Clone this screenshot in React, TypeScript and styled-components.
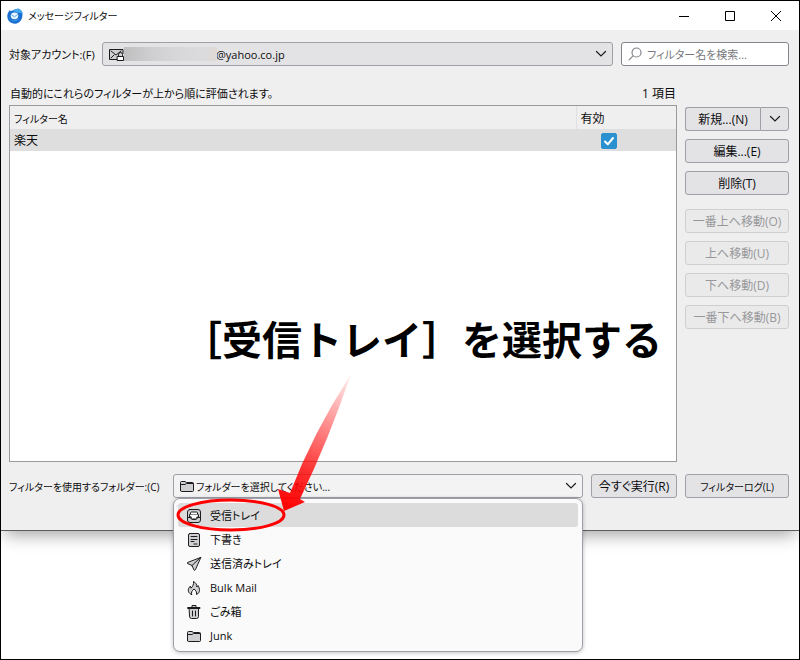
import React from "react";
import styled, { createGlobalStyle } from "styled-components";

const GlobalStyle = createGlobalStyle`
  *, *::before, *::after { box-sizing: border-box; }
  body {
    margin: 0;
    background: #fff;
    color: #0c0c0d;
    font-family: "Open Sans", "Noto Sans CJK JP", sans-serif;
    font-size: 12px;
    line-height: 16px;
    font-feature-settings: "palt";
  }
  button, input, select { font: inherit; font-feature-settings: inherit; color: inherit; margin: 0; }
`;

const Desktop = styled.div`
  display: flex;
  flex-direction: column;
  min-height: 100vh;
  padding-bottom: 128px;
  border: 1px solid #000;
  overflow: hidden;
`;

const Dialog = styled.main`
  flex: 1;
  display: flex;
  flex-direction: column;
  background: #efefef;
  border-bottom: 1px solid #5c5c5c;
  box-shadow: 0 8px 16px -4px rgba(0, 0, 0, 0.36);
`;

const TitleBar = styled.header`
  display: flex;
  align-items: center;
  height: 29px;
  padding-left: 6px;
  gap: 5px;
  background: #fff;
`;

const Title = styled.h1`
  flex: 1;
  margin: 0;
  font-size: 10px;
  font-weight: 400;
`;

const WindowButtons = styled.div`
  display: flex;
`;

const WindowButton = styled.button`
  display: grid;
  place-items: center;
  width: 46px;
  height: 28px;
  padding: 0;
  border: 0;
  background: transparent;
`;

const Content = styled.div`
  flex: 1;
  display: flex;
  flex-direction: column;
  padding: 12px 10px 32px 8px;
`;

const Row = styled.div`
  display: flex;
  align-items: center;
  gap: 8px;
`;

const AccountLabel = styled.label`
  width: 85px;
  padding-top: 2px;
  font-size: 11px;
  white-space: nowrap;
`;

const FolderLabel = styled.label`
  width: 156px;
  padding-top: 2px;
  font-size: 10px;
  white-space: nowrap;
`;

const Picker = styled.div`
  flex: 1;
  position: relative;
  display: flex;
`;

const Select = styled.select<{ $indent: number; $light?: boolean }>`
  appearance: none;
  flex: 1;
  min-width: 0;
  height: 24px;
  padding: 2px 28px 0 ${(p) => p.$indent}px;
  border: 1px solid #9f9fa8;
  border-radius: 3px;
  background: ${(p) => (p.$light ? "#f3f3f3" : "#e3e3e6")};
  font-size: ${(p) => (p.$light ? 10 : 11)}px;
`;

const PickerLead = styled.span`
  position: absolute;
  left: 6px;
  top: 4px;
  display: flex;
  align-items: center;
  height: 16px;
  pointer-events: none;
`;

const PickerArrow = styled.span`
  position: absolute;
  right: 6px;
  top: 6px;
  display: flex;
  pointer-events: none;
`;

const Redaction = styled.span`
  width: 93px;
  height: 14px;
  background: linear-gradient(90deg, #bfbfc0, #cfcfd1 30%, #d8d8db 60%, #dbdbdd 85%, #e0d9d6);
`;

const SearchBox = styled.label`
  display: flex;
  align-items: center;
  gap: 5px;
  width: 168px;
  height: 24px;
  padding: 0 6px;
  border: 1px solid #85858d;
  border-radius: 3px;
  background: #fff;
`;

const SearchInput = styled.input`
  flex: 1;
  min-width: 0;
  padding: 2px 0 0;
  border: 0;
  outline: 0;
  background: transparent;
  font-size: 11px;
  &::placeholder { color: #77777c; opacity: 1; }
`;

const Columns = styled.div`
  flex: 1;
  display: grid;
  grid-template-columns: minmax(0, 1fr) 104px;
  grid-template-rows: auto 1fr;
  column-gap: 8px;
  margin: 20px 0 12px;
`;

const Caption = styled.div`
  display: flex;
  justify-content: space-between;
  padding: 0 1px;
  margin-bottom: 3px;
`;

const Hint = styled.span`
  font-size: 11px;
`;

const ListPane = styled.section`
  grid-row: 2;
  position: relative;
  border: 1px solid #9a9a9e;
  background: #fff;
`;

const FilterTable = styled.table`
  width: 100%;
  border-collapse: collapse;
  table-layout: fixed;
`;

const HeadCell = styled.th<{ $narrow?: boolean }>`
  width: ${(p) => (p.$narrow ? "100px" : "auto")};
  height: 23px;
  padding: 2px 4px 0;
  background: #efefef;
  border-left: ${(p) => (p.$narrow ? "1px solid #e0e0e2" : "0")};
  font-size: ${(p) => (p.$narrow ? 12 : 10)}px;
  font-weight: 400;
  text-align: left;
`;

const Cell = styled.td<{ $check?: boolean }>`
  height: 22px;
  padding: 2px 0 0 ${(p) => (p.$check ? 25 : 4)}px;
  background: #dedede;
`;

const CheckWrap = styled.label`
  display: grid;
  width: 16px;
  height: 16px;
  > * { grid-area: 1 / 1; }
`;

const CheckInput = styled.input`
  appearance: none;
  width: 16px;
  height: 16px;
  border: 1px solid #8f8f9d;
  border-radius: 2px;
  background: #fff;
  & + svg { display: none; pointer-events: none; }
  &:checked { border-color: #2a90cf; background: #2a90cf; }
  &:checked + svg { display: block; }
`;

const Actions = styled.div`
  grid-row: 2;
  display: flex;
  flex-direction: column;
  gap: 8px;
  padding-top: 2px;
`;

const ActionGroup = styled.div`
  display: flex;
  flex-direction: column;
  gap: 8px;
  margin-bottom: 6px;
`;

const Button = styled.button<{ $width?: number; $small?: boolean }>`
  width: ${(p) => (p.$width ? `${p.$width}px` : "auto")};
  height: 24px;
  padding: 2px 0 0;
  border: 1px solid #9f9fa8;
  border-radius: 3px;
  background: #e3e3e6;
  font-size: ${(p) => (p.$small ? 10 : 12)}px;
  white-space: nowrap;
  &:disabled {
    color: #98989a;
    border-color: #cfcfd1;
    background: #eaeaeb;
  }
`;

const Split = styled.div`
  display: flex;
  ${Button}:first-child { flex: 1; border-radius: 3px 0 0 3px; border-right: 0; }
  ${Button}:last-child { display: grid; place-items: center; padding: 0; border-radius: 0 3px 3px 0; }
`;

const Menu = styled.ul`
  position: absolute;
  top: 24px;
  left: 0;
  right: 0;
  margin: 0;
  padding: 4px;
  list-style: none;
  border: 1px solid #9f9fa8;
  border-radius: 7px;
  background: #fafafa;
  font-size: 11px;
  box-shadow: 0 1px 4px rgba(0, 0, 0, 0.25);
`;

const MenuItem = styled.li<{ $active?: boolean }>`
  display: flex;
  align-items: center;
  gap: 8px;
  height: 24px;
  padding: 1px 8px 0;
  border-radius: 3px;
  background: ${(p) => (p.$active ? "#dcdcdc" : "transparent")};
`;

const Callout = styled.p`
  position: absolute;
  right: 14px;
  bottom: 93px;
  margin: 0;
  color: #000;
  font-family: "Noto Sans CJK JP", sans-serif;
  font-size: 40px;
  font-weight: 700;
  line-height: 60px;
  font-feature-settings: normal;
  white-space: nowrap;
`;

const Pointer = styled.svg`
  position: absolute;
  left: 0;
  bottom: -37px;
  pointer-events: none;
`;

const Glyph = ({ children }: { children: React.ReactNode }) => (
  <svg width="16" height="16" viewBox="0 0 16 16" fill="#cfcfd1" stroke="#1c1c1e" strokeLinecap="round" strokeLinejoin="round" aria-hidden="true">
    {children}
  </svg>
);

const FolderIcon = () => (
  <Glyph>
    <path d="M1.5 12.500v-8q0-1 1-1H6l1.500 1h6q1 0 1 1v7q0 1-1 1h-11q-1 0-1-1z" />
    <path d="M1.500 6.500H6l1.500-1h6.500" fill="none" />
  </Glyph>
);

const InboxIcon = () => (
  <Glyph>
    <rect x="1.500" y="1.500" width="13" height="13" rx="2.500" />
    <path d="M2 9.500h2.500q.5 2 2 2h3q1.500 0 2-2H14" fill="none" />
    <path d="M3.500 9V7q0-1 1-1h7q1 0 1 1v2h-1.500q-.5 2-1.500 2h-3q-1 0-1.500-2z" fill="#fff" />
    <path d="M4.500 6V5q0-1 1-1h5q1 0 1 1v1" fill="#fff" />
  </Glyph>
);

const DraftIcon = () => (
  <Glyph>
    <rect x="2.500" y="1.500" width="11" height="13" rx="1.500" />
    <path d="M5 4.500h6M5 7.500h6M5 9.500h3M8 12h3" fill="none" />
  </Glyph>
);

const SentIcon = () => (
  <Glyph>
    <path d="M14.500 1.500 1.500 6.500q-.7.500 0 1L6 9.500l2 4.500q.6.800 1.200 0z" />
    <path d="M14.500 1.500 6 9.500" fill="none" />
  </Glyph>
);

const FireIcon = () => (
  <Glyph>
    <path d="M5.500 14.500C2.500 13.500 1.500 10.500 3 7.800l1.300-1.600.7 2C6.800 6.500 7.800 4.500 7.500 1.500c2.400 1.200 3.500 3.500 3.300 5.500l1.200-1.500c2 3.200 2.500 7.200-1.500 9 .5-2-.5-4-2.500-5.500-2 1.500-3 3.500-2.500 5.500z" />
  </Glyph>
);

const TrashIcon = () => (
  <Glyph>
    <path d="M3.500 4.500h9v8q0 2-2 2h-5q-2 0-2-2z" />
    <path d="M2 3.500h12v1H2zM6 3V1.500h4V3M6.500 7v5M9.500 7v5" />
  </Glyph>
);

const MailLockIcon = () => (
  <Glyph>
    <path d="M15 7.500V3.500H1.500v10H9" />
    <path d="M3 5l5 4 5-4M3 12l3-3" fill="none" />
    <path d="M10.500 10V8.500a2 2 0 0 1 4 0V10" fill="none" />
    <rect x="9.500" y="10.500" width="6" height="4" fill="#fff" />
  </Glyph>
);

const Chevron = () => (
  <svg width="12" height="12" viewBox="0 0 12 12" fill="none" stroke="#1c1c1e" strokeWidth="1.200" strokeLinecap="round" aria-hidden="true">
    <path d="M1.500 3.500 6 8l4.500-4.500" />
  </svg>
);

const AppLogo = () => (
  <svg width="16" height="16" viewBox="0 0 16 16" aria-hidden="true">
    <path d="M8 1.500C11 .2 13 1 14 2.500c1 .6 1.500 1.700 1.400 3C16 10.500 13 15.700 8 15.700 3.500 15.700.3 12.500.3 8.300c0-2 .5-3.500 1.600-4.800L3 1.700l.6 1.500z" fill="#1a6fd0" />
    <path d="M6 3C8 0 12 0 14 2.500c1 .6 1.500 1.700 1.400 3-2-.8-3-1-4.400-.5z" fill="#45a8f0" />
    <ellipse cx="7.500" cy="7.800" rx="3.800" ry="3.400" fill="#e8f5ff" />
    <path d="M4.300 6.500 7.500 8.800l3.200-2.300" fill="none" stroke="#5aaeea" strokeWidth="1" />
    <path d="M1 8.500c2 4 7 5 11.500 1.500-1 4-9 5-11.500-1.500z" fill="#3595ea" />
  </svg>
);

const folders = [
  { name: "受信トレイ", Icon: InboxIcon },
  { name: "下書き", Icon: DraftIcon },
  { name: "送信済みトレイ", Icon: SentIcon },
  { name: "Bulk Mail", Icon: FireIcon },
  { name: "ごみ箱", Icon: TrashIcon },
  { name: "Junk", Icon: FolderIcon },
];

const moves = ["一番上へ移動(O)", "上へ移動(U)", "下へ移動(D)", "一番下へ移動(B)"];

const windowShapes = [
  { label: "最小化", d: "M1 6.500h10" },
  { label: "最大化", d: "M1.500 1.500h9v9h-9z" },
  { label: "閉じる", d: "M1 1l10 10M11 1 1 11" },
];

export default function App() {
  return (
    <>
      <GlobalStyle />
      <Desktop>
        <Dialog>
          <TitleBar>
            <AppLogo />
            <Title>メッセージフィルター</Title>
            <WindowButtons>
              {windowShapes.map(({ label, d }) => (
                <WindowButton key={label} aria-label={label}>
                  <svg width="12" height="12" viewBox="0 0 12 12" fill="none" stroke="#000" aria-hidden="true">
                    <path d={d} />
                  </svg>
                </WindowButton>
              ))}
            </WindowButtons>
          </TitleBar>
          <Content>
            <Row>
              <AccountLabel htmlFor="account">対象アカウント:(F)</AccountLabel>
              <Picker>
                <Select id="account" $indent={113}>
                  <option>@yahoo.co.jp</option>
                </Select>
                <PickerLead>
                  <MailLockIcon />
                  <Redaction />
                </PickerLead>
                <PickerArrow><Chevron /></PickerArrow>
              </Picker>
              <SearchBox>
                <svg width="14" height="14" viewBox="0 0 14 14" fill="none" stroke="#85858a" strokeWidth="1.200" aria-hidden="true">
                  <circle cx="8.500" cy="5.500" r="4.500" />
                  <path d="M5.300 8.700.8 13.200" />
                </svg>
                <SearchInput type="search" aria-label="フィルター名を検索" placeholder="フィルター名を検索..." />
              </SearchBox>
            </Row>

            <Columns>
              <Caption>
                <Hint>自動的にこれらのフィルターが上から順に評価されます。</Hint>
                <span>1 項目</span>
              </Caption>
              <ListPane>
                <FilterTable>
                  <thead>
                    <tr>
                      <HeadCell>フィルター名</HeadCell>
                      <HeadCell $narrow>有効</HeadCell>
                    </tr>
                  </thead>
                  <tbody>
                    <tr>
                      <Cell>楽天</Cell>
                      <Cell $check>
                        <CheckWrap>
                          <CheckInput type="checkbox" defaultChecked aria-label="楽天 有効" />
                          <svg width="16" height="16" viewBox="0 0 16 16" fill="none" stroke="#fff" strokeWidth="2" strokeLinecap="round" strokeLinejoin="round" aria-hidden="true">
                            <path d="M4 8.500 6.800 11.300 12 5" />
                          </svg>
                        </CheckWrap>
                      </Cell>
                    </tr>
                  </tbody>
                </FilterTable>
                <Callout>［受信トレイ］を選択する</Callout>
              </ListPane>
              <Actions>
                <ActionGroup>
                  <Split>
                    <Button>新規...(N)</Button>
                    <Button $width={29} aria-label="新規メニュー"><Chevron /></Button>
                  </Split>
                  <Button>編集...(E)</Button>
                  <Button>削除(T)</Button>
                </ActionGroup>
                {moves.map((label) => (
                  <Button key={label} disabled>{label}</Button>
                ))}
              </Actions>
            </Columns>

            <Row>
              <FolderLabel htmlFor="folder">フィルターを使用するフォルダー:(C)</FolderLabel>
              <Picker>
                <Select id="folder" $indent={22} $light>
                  <option>フォルダーを選択してください...</option>
                </Select>
                <PickerLead><FolderIcon /></PickerLead>
                <PickerArrow><Chevron /></PickerArrow>
                <Menu role="listbox" aria-label="フォルダー">
                  {folders.map(({ name, Icon }, i) => (
                    <MenuItem key={name} role="option" aria-selected={i === 0} $active={i === 0}>
                      <Icon />
                      {name}
                    </MenuItem>
                  ))}
                </Menu>
                <Pointer width="190" height="162" viewBox="0 0 190 162" aria-hidden="true">
                  <defs>
                    <linearGradient id="fade" gradientUnits="userSpaceOnUse" x1="178" y1="1" x2="112" y2="138">
                      <stop offset="0" stopColor="#f00" stopOpacity="0.050" />
                      <stop offset="0.700" stopColor="#f00" stopOpacity="0.800" />
                      <stop offset="1" stopColor="#f00" />
                    </linearGradient>
                  </defs>
                  <path d="M178 1Q140 60 117 120L105 116 111 138 132 129 127 126Q156 66 178 1z" fill="url(#fade)" />
                  <ellipse cx="58" cy="142" rx="53" ry="15" fill="none" stroke="#f00" strokeWidth="3" />
                </Pointer>
              </Picker>
              <Button $width={86}>今すぐ実行(R)</Button>
              <Button $width={104} $small>フィルターログ(L)</Button>
            </Row>
          </Content>
        </Dialog>
      </Desktop>
    </>
  );
}
